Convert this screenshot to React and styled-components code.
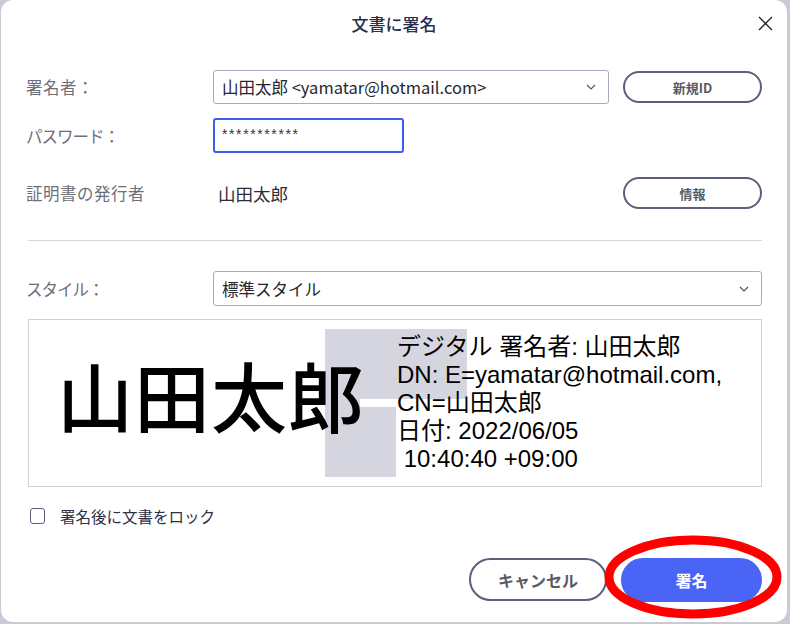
import React from "react";
import styled, { createGlobalStyle } from "styled-components";

const GlobalStyle = createGlobalStyle`
  html, body {
    margin: 0;
    padding: 0;
    background: #c9cad3;
  }
  body {
    font-family: "Noto Sans CJK JP", "Noto Sans", sans-serif;
  }
`;

const Page = styled.div`
  width: 790px;
  height: 624px;
  overflow: hidden;
`;

const Dialog = styled.div`
  position: relative;
  width: 786px;
  height: 622px;
  margin-left: 1px;
  box-sizing: border-box;
  padding: 0 25px 0 25px;
  background: #fff;
  border-radius: 12px;
  display: flex;
  flex-direction: column;
`;

const Header = styled.div`
  display: grid;
  grid-template-columns: 1fr auto 1fr;
  align-items: center;
  height: 46px;
  margin: 0 -25px;
  padding: 0 14px;
`;

const Title = styled.h1`
  grid-column: 2;
  margin: 0;
  font-size: 17px;
  font-weight: 500;
  color: #2b2e4a;
`;

const CloseButton = styled.button`
  grid-column: 3;
  justify-self: end;
  width: 16px;
  height: 16px;
  padding: 0;
  border: none;
  background: none;
  display: flex;
  align-items: center;
  justify-content: center;
  cursor: pointer;
`;

const FieldRow = styled.div`
  display: grid;
  grid-template-columns: ${(p) => (p.$wide ? "187px 1fr" : "187px 396px 1fr")};
  align-items: center;
  height: ${(p) => p.$h}px;
  margin-top: ${(p) => p.$top}px;
`;

const Label = styled.span`
  font-size: 16.5px;
  letter-spacing: ${(p) => (p.$narrow ? "-1px" : "0.5px")};
  color: #6f6f78;
`;

const Value = styled.span`
  font-size: 17.5px;
  color: #2d2d36;
  padding-left: 5px;
`;

const Select = styled.div`
  height: 100%;
  box-sizing: border-box;
  border: 1px solid #a9abbd;
  border-radius: 3px;
  display: flex;
  align-items: center;
  justify-content: space-between;
  padding: 0 12px 0 8px;
  font-size: 16.5px;
  color: #26262e;
`;

const PasswordInput = styled.div`
  width: 191px;
  height: 100%;
  box-sizing: border-box;
  border: 2px solid #3d5af1;
  border-radius: 3px;
  display: flex;
  align-items: center;
  padding: 0 0 4px 7px;
  font-family: "Liberation Sans", sans-serif;
  font-size: 14px;
  letter-spacing: 1.6px;
  color: #333;
`;

const PillButton = styled.button`
  justify-self: end;
  width: ${(p) => p.$w || 139}px;
  height: ${(p) => p.$h || 32}px;
  border-radius: 999px;
  font-family: "Noto Sans CJK JP", sans-serif;
  font-weight: 700;
  font-size: ${(p) => p.$fs || 13}px;
  cursor: pointer;
  border: 2px solid ${(p) => (p.$primary ? "#4a64f6" : "#5b5f7b")};
  background: ${(p) => (p.$primary ? "#4a64f6" : "#fff")};
  color: ${(p) => (p.$primary ? "#fff" : "#5a5a62")};
`;

const Divider = styled.hr`
  margin: 31px 0 0 2px;
  border: none;
  height: 1px;
  background: #d7d8de;
`;

const Preview = styled.div`
  position: relative;
  margin: 13px 0 0 2px;
  height: 168px;
  box-sizing: border-box;
  border: 1px solid #cfd0d8;
  display: flex;
  align-items: center;
  overflow: hidden;
`;

const Watermark = styled.svg`
  position: absolute;
  left: 296px;
  top: 9px;
`;

const BigName = styled.div`
  position: relative;
  margin-left: 28px;
  margin-top: -18px;
  width: 340px;
  font-family: "Noto Sans CJK JP", sans-serif;
  font-size: 76px;
  font-weight: 500;
  letter-spacing: 1px;
  color: #000;
  line-height: 1;
`;

const Details = styled.div`
  position: relative;
  font-family: "Liberation Sans", "Noto Sans CJK JP", sans-serif;
  font-size: 24px;
  line-height: 28px;
  color: #000;
  white-space: pre;
`;

const CheckRow = styled.label`
  display: flex;
  align-items: center;
  gap: 15px;
  margin: 18px 0 0 4px;
  font-size: 15.5px;
  color: #2d3047;
`;

const CheckBox = styled.span`
  width: 15px;
  height: 16px;
  box-sizing: border-box;
  border: 1.5px solid #5a5f7a;
  border-radius: 3px;
`;

const Footer = styled.div`
  display: flex;
  justify-content: flex-end;
  gap: 14px;
  margin-top: 31px;
`;

const Highlight = styled.svg`
  position: absolute;
  left: 602px;
  top: 534px;
  pointer-events: none;
`;

function Chevron() {
  return (
    <svg width="10" height="6" viewBox="0 0 10 6">
      <polyline points="1,1 5,5 9,1" fill="none" stroke="#555" strokeWidth="1.2" />
    </svg>
  );
}

export default function App() {
  return (
    <Page>
      <GlobalStyle />
      <Dialog>
        <Header>
          <Title>文書に署名</Title>
          <CloseButton aria-label="close">
            <svg width="15" height="15" viewBox="0 0 15 15">
              <path d="M1 1 L14 14 M14 1 L1 14" stroke="#222" strokeWidth="1.3" />
            </svg>
          </CloseButton>
        </Header>

        <FieldRow $h={34} $top={24}>
          <Label>署名者：</Label>
          <Select>
            <span>山田太郎 &lt;yamatar@hotmail.com&gt;</span>
            <Chevron />
          </Select>
          <PillButton>新規ID</PillButton>
        </FieldRow>

        <FieldRow $h={35} $top={14}>
          <Label $narrow>パスワード：</Label>
          <PasswordInput>***********</PasswordInput>
        </FieldRow>

        <FieldRow $h={32} $top={24}>
          <Label>証明書の発行者</Label>
          <Value>山田太郎</Value>
          <PillButton>情報</PillButton>
        </FieldRow>

        <Divider />

        <FieldRow $wide $h={35} $top={30}>
          <Label $narrow>スタイル：</Label>
          <Select>
            <span>標準スタイル</span>
            <Chevron />
          </Select>
        </FieldRow>

        <Preview>
          <Watermark width="145" height="150" viewBox="0 0 145 150">
            <rect x="0" y="0" width="142" height="70" fill="#d4d5df" />
            <rect x="0" y="70" width="35" height="8" fill="#d4d5df" />
            <rect x="0" y="78" width="71" height="70" fill="#d4d5df" />
          </Watermark>
          <BigName>山田太郎</BigName>
          <Details>
            {"デジタル 署名者: 山田太郎\nDN: E=yamatar@hotmail.com,\nCN=山田太郎\n日付: 2022/06/05\n 10:40:40 +09:00"}
          </Details>
        </Preview>

        <CheckRow>
          <CheckBox />
          署名後に文書をロック
        </CheckRow>

        <Footer>
          <PillButton $w={138} $h={43} $fs={16}>キャンセル</PillButton>
          <PillButton $primary $w={141} $h={44} $fs={16}>署名</PillButton>
        </Footer>

        <Highlight width="182" height="86" viewBox="0 0 182 86">
          <ellipse cx="90" cy="43" rx="84" ry="37" fill="none" stroke="#ff0000" strokeWidth="9" />
        </Highlight>
      </Dialog>
    </Page>
  );
}
